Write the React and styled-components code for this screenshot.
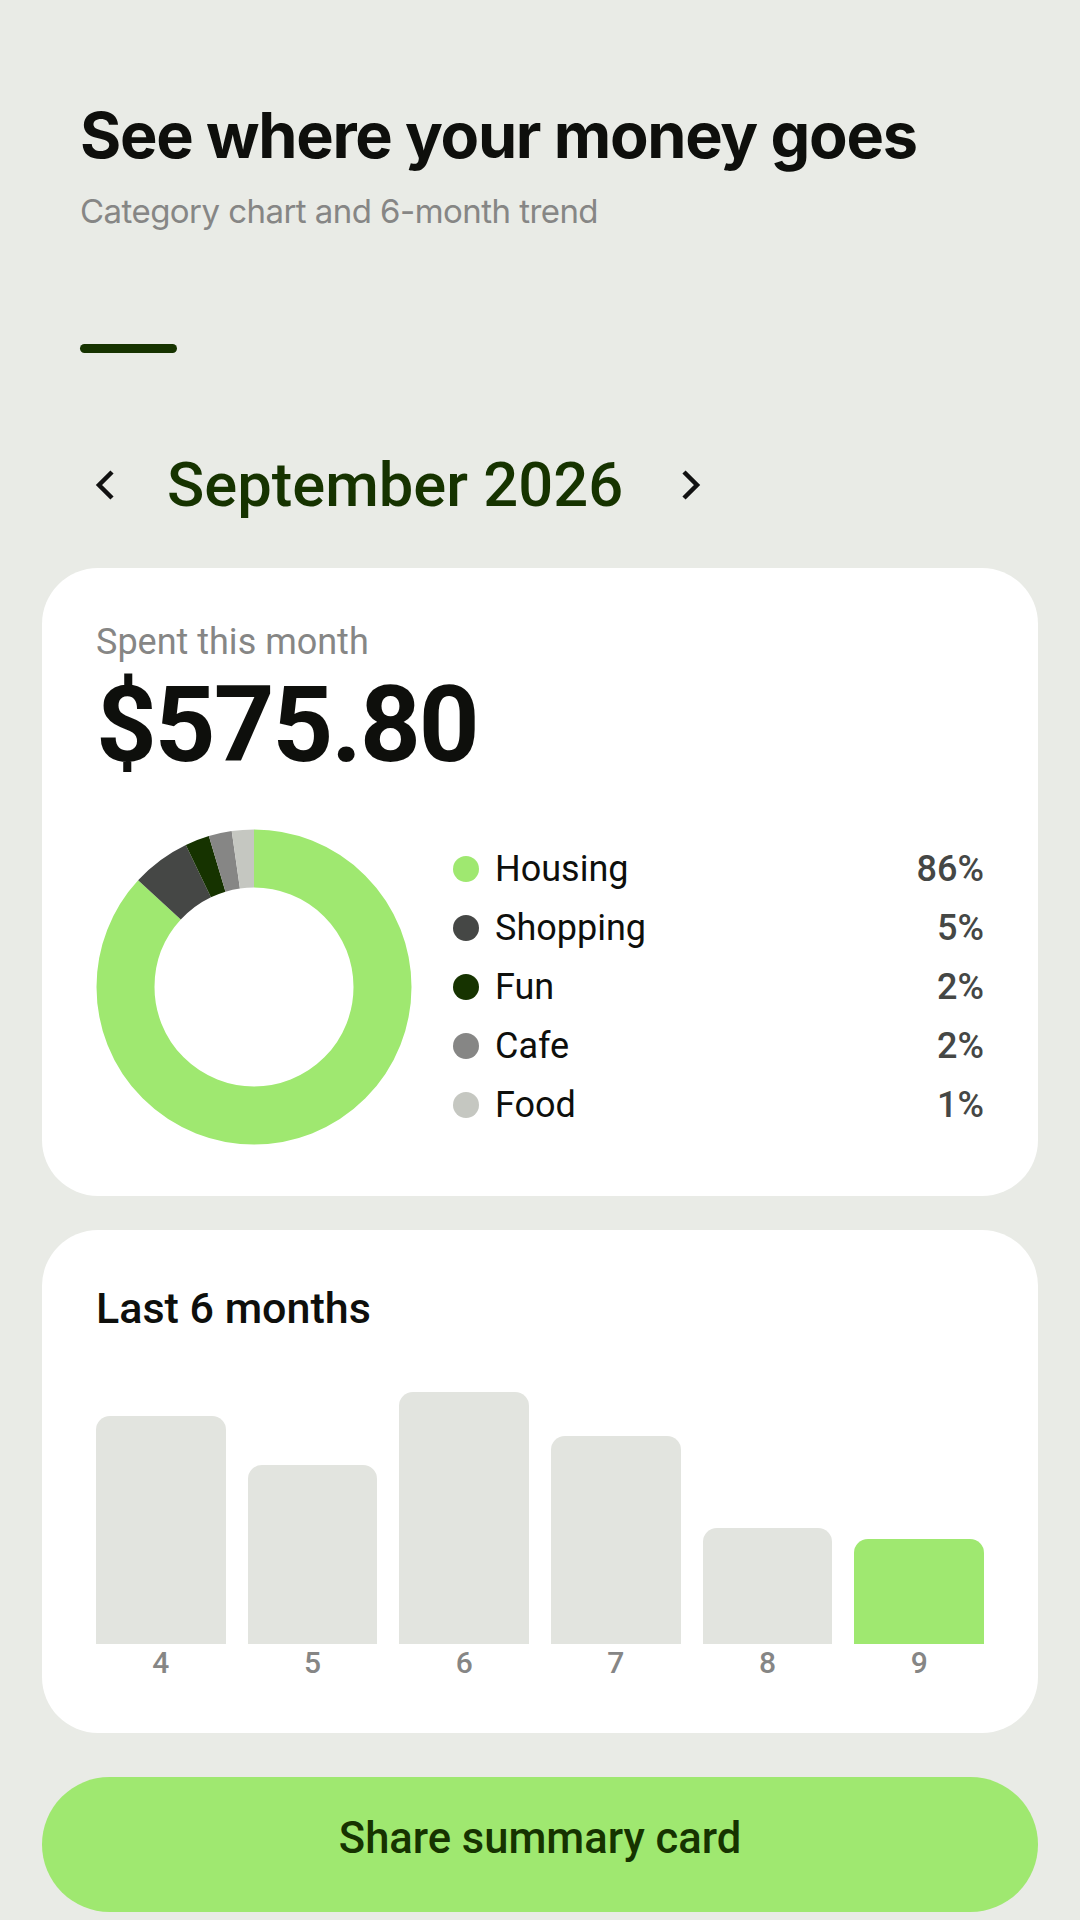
import React from "react";
import styled, { createGlobalStyle } from "styled-components";

const GlobalStyle = createGlobalStyle`
  html, body {
    margin: 0;
    padding: 0;
    background: #e9ebe6;
  }
  * { box-sizing: border-box; }
`;

const C = {
  forest: "#163300",
  lime: "#9fe870",
  ink: "#0e0f0c",
  slate: "#454745",
  grey: "#868685",
  pale: "#c5c7c1",
  bar: "#e2e4df",
};

const Page = styled.main`
  width: 1080px;
  min-height: 1920px;
  padding: 0 42px;
  font-family: Roboto, "Noto Sans", sans-serif;
  color: ${C.ink};
`;

const Header = styled.header`
  padding: 98px 0 0 38px;
  display: flex;
  flex-direction: column;
  align-items: flex-start;
`;

const Title = styled.h1`
  margin: 0;
  font-family: Inter, "Liberation Sans", sans-serif;
  font-weight: 700;
  font-size: 63px;
  line-height: 74px;
  letter-spacing: -1.3px;
  color: ${C.ink};
`;

const Subtitle = styled.p`
  margin: 19px 0 0;
  font-family: Inter, "Liberation Sans", sans-serif;
  font-weight: 400;
  font-size: 33px;
  line-height: 40px;
  letter-spacing: -0.55px;
  color: ${C.grey};
`;

const Accent = styled.span`
  display: block;
  margin-top: 113px;
  width: 97px;
  height: 9px;
  border-radius: 5px;
  background: ${C.forest};
`;

const MonthNav = styled.nav`
  margin-top: 97px;
  height: 70px;
  padding-left: 53px;
  display: flex;
  align-items: center;
  gap: 52px;
`;

const NavButton = styled.button`
  border: none;
  background: none;
  padding: 0;
  width: 20px;
  height: 32px;
  display: flex;
  cursor: pointer;
  margin-left: ${(p) => p.$shift || 0}px;
`;

const MonthLabel = styled.h2`
  margin: 0;
  font-size: 61.5px;
  line-height: 70px;
  font-weight: 500;
  color: ${C.forest};
`;

const Card = styled.section`
  margin-top: ${(p) => p.$gap}px;
  background: #fff;
  border-radius: 56px;
  padding: ${(p) => p.$padTop}px 54px ${(p) => p.$padBottom}px;
`;

const Caption = styled.div`
  font-size: 36px;
  line-height: 40px;
  color: ${C.grey};
`;

const Amount = styled.div`
  margin-top: 3px;
  font-size: 106px;
  line-height: 120px;
  font-weight: 700;
  letter-spacing: -2px;
  color: ${C.ink};
`;

const Breakdown = styled.div`
  margin-top: 44px;
  display: flex;
  align-items: center;
  gap: 41px;
`;

const Legend = styled.ul`
  flex: 1;
  margin: 0;
  padding: 0;
  list-style: none;
  display: flex;
  flex-direction: column;
`;

const LegendRow = styled.li`
  height: 59px;
  display: flex;
  align-items: center;
  gap: 16px;
  font-size: 36px;
  line-height: 59px;
`;

const Dot = styled.span`
  width: 26px;
  height: 26px;
  border-radius: 50%;
  flex: none;
  background: ${(p) => p.$color};
`;

const LegendName = styled.span`
  flex: 1;
  color: ${C.ink};
`;

const LegendPct = styled.span`
  font-weight: 500;
  color: ${C.slate};
`;

const SectionTitle = styled.h3`
  margin: 0;
  font-size: 43px;
  line-height: 52px;
  font-weight: 500;
  color: ${C.ink};
`;

const Bars = styled.div`
  margin-top: 0;
  height: 347px;
  display: grid;
  grid-template-columns: repeat(6, 1fr);
  column-gap: 22px;
  align-items: end;
`;

const BarColumn = styled.div`
  display: flex;
  flex-direction: column;
  align-items: stretch;
`;

const Bar = styled.div`
  border-radius: 14px 14px 0 0;
  background: ${(p) => (p.$current ? C.lime : C.bar)};
`;

const BarLabel = styled.span`
  margin-top: 1px;
  text-align: center;
  font-size: 30px;
  line-height: 36px;
  font-weight: 500;
  color: ${C.grey};
`;

const ShareButton = styled.button`
  margin-top: 44px;
  width: 100%;
  height: 135px;
  border: none;
  border-radius: 68px;
  background: ${C.lime};
  color: ${C.forest};
  font-family: Roboto, "Noto Sans", sans-serif;
  font-size: 43.5px;
  font-weight: 500;
  line-height: 50px;
  padding: 0 0 12px;
  cursor: pointer;
`;

function Chevron({ dir }) {
  const pts = dir === "left" ? "17,3 4,16 17,29" : "3,3 16,16 3,29";
  return (
    <svg width="20" height="32" viewBox="0 0 20 32" aria-hidden="true">
      <polyline
        points={pts}
        fill="none"
        stroke="#111"
        strokeWidth="4.5"
        strokeLinejoin="miter"
        strokeLinecap="butt"
      />
    </svg>
  );
}

const categories = [
  { name: "Housing", pct: "86%", color: C.lime, deg: 312.5 },
  { name: "Shopping", pct: "5%", color: C.slate, deg: 21.7 },
  { name: "Fun", pct: "2%", color: C.forest, deg: 9 },
  { name: "Cafe", pct: "2%", color: C.grey, deg: 8.5 },
  { name: "Food", pct: "1%", color: C.pale, deg: 8.3 },
];

function Donut() {
  const size = 316;
  const r = 128.5;
  const circ = 2 * Math.PI * r;
  let start = 0;
  return (
    <svg width={size} height={size} viewBox={`0 0 ${size} ${size}`} style={{ flex: "none" }}>
      <g transform={`rotate(-90 ${size / 2} ${size / 2})`}>
        {categories.map((c) => {
          const len = (c.deg / 360) * circ;
          const el = (
            <circle
              key={c.name}
              cx={size / 2}
              cy={size / 2}
              r={r}
              fill="none"
              stroke={c.color}
              strokeWidth="58"
              strokeDasharray={`${len} ${circ - len}`}
              strokeDashoffset={-start}
            />
          );
          start += len;
          return el;
        })}
      </g>
    </svg>
  );
}

const months = [
  { m: "4", h: 228 },
  { m: "5", h: 179 },
  { m: "6", h: 252 },
  { m: "7", h: 208 },
  { m: "8", h: 116 },
  { m: "9", h: 105, current: true },
];

export default function App() {
  return (
    <>
      <GlobalStyle />
      <Page>
        <Header>
          <Title>See where your money goes</Title>
          <Subtitle>Category chart and 6-month trend</Subtitle>
          <Accent />
        </Header>

        <MonthNav>
          <NavButton aria-label="Previous month">
            <Chevron dir="left" />
          </NavButton>
          <MonthLabel>September 2026</MonthLabel>
          <NavButton aria-label="Next month" $shift={6}>
            <Chevron dir="right" />
          </NavButton>
        </MonthNav>

        <Card $gap={48} $padTop={54} $padBottom={51}>
          <Caption>Spent this month</Caption>
          <Amount>$575.80</Amount>
          <Breakdown>
            <Donut />
            <Legend>
              {categories.map((c) => (
                <LegendRow key={c.name}>
                  <Dot $color={c.color} />
                  <LegendName>{c.name}</LegendName>
                  <LegendPct>{c.pct}</LegendPct>
                </LegendRow>
              ))}
            </Legend>
          </Breakdown>
        </Card>

        <Card $gap={34} $padTop={52} $padBottom={52}>
          <SectionTitle>Last 6 months</SectionTitle>
          <Bars>
            {months.map((b) => (
              <BarColumn key={b.m}>
                <Bar $current={b.current} style={{ height: b.h }} />
                <BarLabel>{b.m}</BarLabel>
              </BarColumn>
            ))}
          </Bars>
        </Card>

        <ShareButton>Share summary card</ShareButton>
      </Page>
    </>
  );
}
